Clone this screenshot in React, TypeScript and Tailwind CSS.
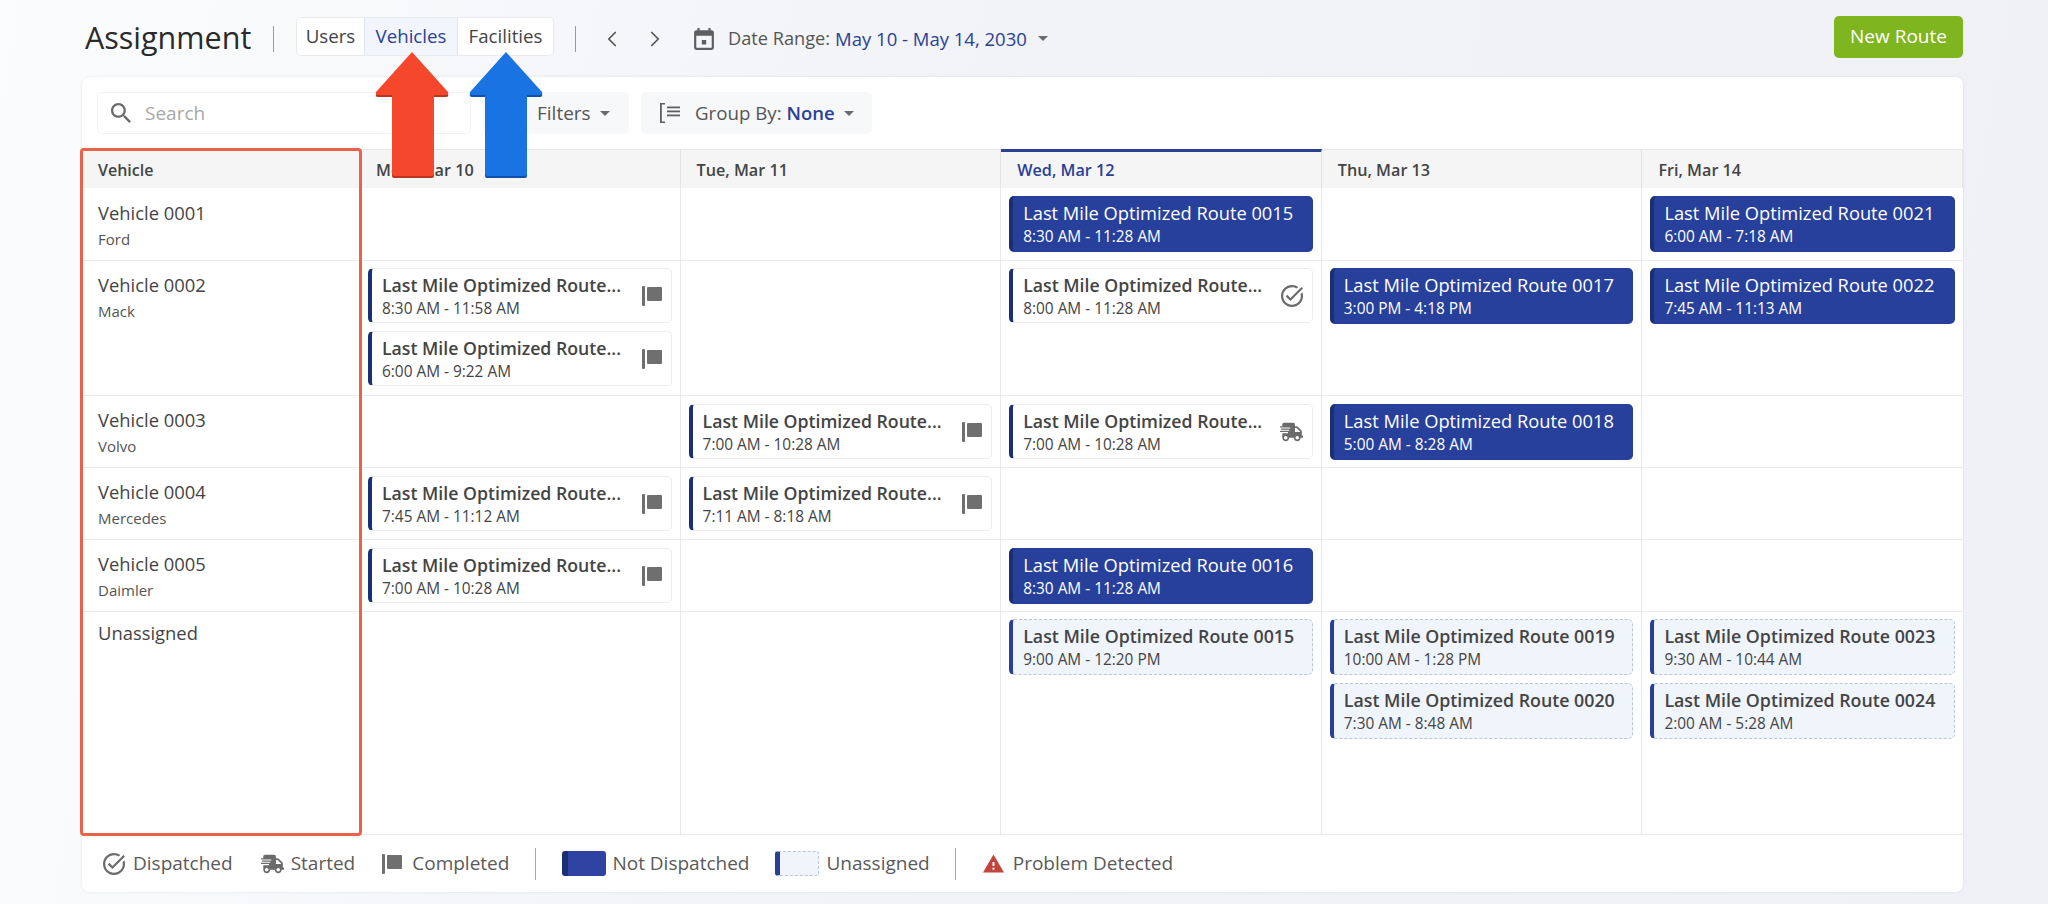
import { ChevronLeft, ChevronRight } from "lucide-react";
import { FC } from "react";
import { FaShippingFast } from "react-icons/fa";

type RouteKind = "solid" | "done" | "check" | "truck" | "open";

type Route = {
  time: string;
  num?: string;
  kind: RouteKind;
};

type Row = {
  name: string;
  make?: string;
  height: string;
  namePad: string;
  cellPad: string;
  days: Route[][];
};

const rows: Row[] = [
  {
    name: "Vehicle 0001",
    make: "Ford",
    height: "h-[73px]",
    namePad: "pt-[12px]",
    cellPad: "pt-[8px]",
    days: [
      [],
      [],
      [{ num: "0015", time: "8:30 AM - 11:28 AM", kind: "solid" }],
      [],
      [{ num: "0021", time: "6:00 AM - 7:18 AM", kind: "solid" }],
    ],
  },
  {
    name: "Vehicle 0002",
    make: "Mack",
    height: "h-[135px]",
    namePad: "pt-[11px]",
    cellPad: "pt-[7px]",
    days: [
      [
        { time: "8:30 AM - 11:58 AM", kind: "done" },
        { time: "6:00 AM - 9:22 AM", kind: "done" },
      ],
      [],
      [{ time: "8:00 AM - 11:28 AM", kind: "check" }],
      [{ num: "0017", time: "3:00 PM - 4:18 PM", kind: "solid" }],
      [{ num: "0022", time: "7:45 AM - 11:13 AM", kind: "solid" }],
    ],
  },
  {
    name: "Vehicle 0003",
    make: "Volvo",
    height: "h-[72px]",
    namePad: "pt-[11px]",
    cellPad: "pt-[8px]",
    days: [
      [],
      [{ time: "7:00 AM - 10:28 AM", kind: "done" }],
      [{ time: "7:00 AM - 10:28 AM", kind: "truck" }],
      [{ num: "0018", time: "5:00 AM - 8:28 AM", kind: "solid" }],
      [],
    ],
  },
  {
    name: "Vehicle 0004",
    make: "Mercedes",
    height: "h-[72px]",
    namePad: "pt-[11px]",
    cellPad: "pt-[8px]",
    days: [
      [{ time: "7:45 AM - 11:12 AM", kind: "done" }],
      [{ time: "7:11 AM - 8:18 AM", kind: "done" }],
      [],
      [],
      [],
    ],
  },
  {
    name: "Vehicle 0005",
    make: "Daimler",
    height: "h-[72px]",
    namePad: "pt-[11px]",
    cellPad: "pt-[8px]",
    days: [
      [{ time: "7:00 AM - 10:28 AM", kind: "done" }],
      [],
      [{ num: "0016", time: "8:30 AM - 11:28 AM", kind: "solid" }],
      [],
      [],
    ],
  },
  {
    name: "Unassigned",
    height: "h-[223px]",
    namePad: "pt-[8px]",
    cellPad: "pt-[7px]",
    days: [
      [],
      [],
      [{ num: "0015", time: "9:00 AM - 12:20 PM", kind: "open" }],
      [
        { num: "0019", time: "10:00 AM - 1:28 PM", kind: "open" },
        { num: "0020", time: "7:30 AM - 8:48 AM", kind: "open" },
      ],
      [
        { num: "0023", time: "9:30 AM - 10:44 AM", kind: "open" },
        { num: "0024", time: "2:00 AM - 5:28 AM", kind: "open" },
      ],
    ],
  },
];

const FlagIcon: FC<{ className?: string }> = ({ className }) => (
  <svg viewBox="0 0 20 20" className={className} fill="#6f6f6f">
    <rect x="0" y="0" width="3" height="20" rx="1" />
    <rect x="5" y="1" width="15" height="14" rx="1" />
  </svg>
);

const CheckIcon: FC<{ className?: string }> = ({ className }) => (
  <svg viewBox="2 2 20 20" className={className} fill="#6b6b6b">
    <path d="M22 5.18 10.59 16.6l-4.24-4.24 1.41-1.41 2.83 2.83 10-10L22 5.18zm-2.21 5.04c.13.57.21 1.17.21 1.78 0 4.42-3.58 8-8 8s-8-3.58-8-8 3.58-8 8-8c1.58 0 3.04.46 4.28 1.25l1.44-1.44C16.1 2.67 14.13 2 12 2 6.48 2 2 6.48 2 12s4.48 10 10 10 10-4.48 10-10c0-1.19-.22-2.33-.6-3.39l-1.61 1.61z" />
  </svg>
);

const Caret: FC = () => (
  <svg viewBox="0 0 10 5" className="w-[10px] h-[5px]" fill="#6b6b6b">
    <path d="M0 0h10L5 5z" />
  </svg>
);

const RouteChip: FC<{ route: Route }> = ({ route }) => {
  const label = route.num
    ? `Last Mile Optimized Route ${route.num}`
    : "Last Mile Optimized Route...";

  if (route.kind === "solid") {
    return (
      <div className="h-[56px] rounded-[5px] bg-[#27409b] border-l-[4px] border-[#1c2f73] pl-[10px] pt-[1px] flex flex-col justify-center text-white">
        <div className="text-[18.3px] leading-[24px] font-medium whitespace-nowrap">{label}</div>
        <div className="text-[15.4px] leading-[23px] whitespace-nowrap">{route.time}</div>
      </div>
    );
  }

  if (route.kind === "open") {
    return (
      <div className="h-[56px] rounded-[5px] bg-[#f0f4fb] border border-dashed border-[#b9c7df] border-l-[4px] [border-left-style:solid] border-l-[#2a4097] pl-[10px] pt-[1px] flex flex-col justify-center text-[#444444]">
        <div className="text-[17.8px] leading-[24px] font-semibold whitespace-nowrap">{label}</div>
        <div className="text-[15.4px] leading-[23px] whitespace-nowrap">{route.time}</div>
      </div>
    );
  }

  return (
    <div className="h-[55px] rounded-[5px] bg-white border border-[#ececec] border-l-[4px] border-l-[#1c2f73] pl-[10px] pr-[9px] pt-[1px] flex items-center justify-between text-[#444444]">
      <div className="flex flex-col">
        <div className="text-[17.7px] leading-[24px] font-semibold whitespace-nowrap">{label}</div>
        <div className="text-[15.4px] leading-[23px] whitespace-nowrap">{route.time}</div>
      </div>
      {route.kind === "done" && <FlagIcon className="w-[20px] h-[20px]" />}
      {route.kind === "check" && <CheckIcon className="w-[22px] h-[22px]" />}
      {route.kind === "truck" && <FaShippingFast className="w-[23px] h-[20px] text-[#6b6b6b]" />}
    </div>
  );
};

const DayHead: FC<{ label: string; today?: boolean }> = ({ label, today }) =>
  today ? (
    <div className="h-[39px] bg-[#f5f5f5] border-t-[3px] border-[#2a4097] -mt-[1px] pl-[16px] flex items-center text-[16.2px] font-semibold text-[#2a4097] border-r border-r-[#e4e4e4]">
      {label}
    </div>
  ) : (
    <div className="h-full bg-[#f5f5f5] border-r border-[#e4e4e4] pl-[16px] pt-[2px] flex items-center text-[16.2px] font-semibold text-[#444444]">
      {label}
    </div>
  );

export default function App() {
  return (
    <div className="relative w-full h-screen overflow-hidden bg-[linear-gradient(100deg,#fbfcfd_0%,#f1f3f7_45%,#eff1f6_100%)] font-['Open_Sans',sans-serif] text-[#444444] pl-[82px] pr-[85px]">
      {/* Top bar */}
      <header className="h-[77px] flex items-center">
        <h1 className="text-[30.5px] font-normal text-[#2a2a2a] w-[191px] pl-[3px] -mt-[1px] whitespace-nowrap">Assignment</h1>
        <div className="w-[1px] h-[26px] bg-[#9a9a9a]" />
        <div className="ml-[22px] h-[39px] flex items-stretch rounded-[5px] bg-white border border-[#e8eaee] text-[18.7px] font-medium -mt-[4px]">
          <div className="w-[67px] flex items-center justify-center">Users</div>
          <div className="w-[94px] flex items-center justify-center bg-[#f2f6fc] border-x border-[#e2e6ee] text-[#2a4097]">Vehicles</div>
          <div className="w-[95px] flex items-center justify-center">Facilities</div>
        </div>
        <div className="ml-[21px] w-[1px] h-[26px] bg-[#9a9a9a]" />
        <ChevronLeft className="ml-[23px] w-[26px] h-[26px] text-[#555555]" strokeWidth={1.6} />
        <ChevronRight className="ml-[17px] w-[26px] h-[26px] text-[#555555]" strokeWidth={1.6} />
        <svg viewBox="3 1 18 20" className="ml-[26px] w-[20px] h-[22px]" fill="#5f5f5f">
          <path d="M14 12h-4v4h4v-4zM16 1v2H8V1H6v2H5c-1.11 0-1.99.9-1.99 2L3 19c0 1.1.89 2 2 2h14c1.1 0 2-.9 2-2V5c0-1.1-.9-2-2-2h-1V1h-2zm3 18H5V8h14v11z" />
        </svg>
        <span className="ml-[14px] text-[18.2px] text-[#555555]">Date Range:</span>
        <span className="ml-[5px] text-[18.5px] font-medium text-[#2a4097]">May 10 - May 14, 2030</span>
        <span className="ml-[11px]"><Caret /></span>
        <button className="ml-auto w-[129px] h-[42px] -mt-[4px] rounded-[5px] bg-[#7fb51f] text-white text-[19px] font-medium">New Route</button>
      </header>

      {/* Board */}
      <main className="relative h-[815px] rounded-[7px] bg-white shadow-[0_0_3px_rgba(60,70,90,0.12)]">
        <div className="h-[72px] pl-[15px] flex items-center gap-[12px]">
          <div className="w-[374px] h-[42px] rounded-[5px] border border-[#f1f2f4] flex items-center pl-[13px] gap-[14px]">
            <svg viewBox="3 3 17.5 17.5" className="w-[20px] h-[20px]" fill="#6b6b6b">
              <path d="M15.5 14h-.79l-.28-.27C15.41 12.59 16 11.11 16 9.5 16 5.91 13.09 3 9.5 3S3 5.91 3 9.5 5.91 16 9.5 16c1.61 0 3.09-.59 4.23-1.57l.27.28v.79l5 4.99L20.49 19l-4.99-5zm-6 0C7.01 14 5 11.99 5 9.5S7.01 5 9.5 5 14 7.01 14 9.5 11.99 14 9.5 14z" />
            </svg>
            <span className="text-[19px] text-[#a8a8a8]">Search</span>
          </div>
          <div className="w-[146px] h-[42px] rounded-[5px] bg-[#f7f8fa] flex items-center pl-[54px] gap-[9px]">
            <span className="text-[19px] font-medium text-[#555555]">Filters</span>
            <Caret />
          </div>
          <div className="w-[231px] h-[42px] rounded-[5px] bg-[#f7f8fa] flex items-center pl-[19px]">
            <svg viewBox="0 0 20 20" className="w-[20px] h-[20px]" fill="#5f5f5f">
              <path d="M0 0h5v1.6H1.8v16.8H5V20H0z" />
              <rect x="7" y="3.5" width="13" height="1.8" />
              <rect x="7" y="7.5" width="13" height="1.8" />
              <rect x="7" y="11.5" width="13" height="1.8" />
            </svg>
            <span className="ml-[15px] text-[18.7px] text-[#555555]">Group By:</span>
            <span className="ml-[5px] text-[18.5px] font-semibold text-[#2a4097]">None</span>
            <span className="ml-[9px]"><Caret /></span>
          </div>
        </div>

        <div className="grid grid-cols-[278px_repeat(5,1fr)] border-t border-[#e6e6e6] h-[39px]">
          <div className="h-full bg-[#f5f5f5] pl-[16px] pt-[2px] flex items-center text-[16px] font-semibold text-[#444444]">Vehicle</div>
          <DayHead label="Mon, Mar 10" />
          <DayHead label="Tue, Mar 11" />
          <DayHead label="Wed, Mar 12" today />
          <DayHead label="Thu, Mar 13" />
          <DayHead label="Fri, Mar 14" />
        </div>

        {rows.map((row) => (
          <div key={row.name} className={`grid grid-cols-[278px_repeat(5,1fr)] border-b border-[#ebebeb] ${row.height}`}>
            <div className={`pl-[16px] border-r border-[#e9e9e9] ${row.namePad}`}>
              <div className="text-[18.4px] leading-[26px] text-[#444444]">{row.name}</div>
              {row.make && <div className="text-[15px] leading-[20px] mt-[3px] text-[#555555]">{row.make}</div>}
            </div>
            {row.days.map((day, i) => (
              <div key={i} className={`px-[8px] flex flex-col gap-[8px] border-r border-[#e9e9e9] last:border-r-0 ${row.cellPad}`}>
                {day.map((route, j) => (
                  <RouteChip key={j} route={route} />
                ))}
              </div>
            ))}
          </div>
        ))}

        {/* Legend */}
        <footer className="h-[57px] flex items-center pl-[21px] text-[19px] text-[#5a5a5a]">
          <CheckIcon className="w-[22px] h-[22px]" />
          <span className="ml-[8px]">Dispatched</span>
          <FaShippingFast className="ml-[28px] w-[23px] h-[20px] text-[#6b6b6b]" />
          <span className="ml-[7px]">Started</span>
          <FlagIcon className="ml-[27px] w-[20px] h-[20px]" />
          <span className="ml-[10px]">Completed</span>
          <div className="ml-[26px] w-[1px] h-[32px] bg-[#a8a8a8]" />
          <div className="ml-[26px] w-[44px] h-[25px] rounded-[3px] bg-[#2f43a3] border-l-[6px] border-[#1c2f73]" />
          <span className="ml-[6px]">Not Dispatched</span>
          <div className="ml-[26px] w-[44px] h-[25px] rounded-[3px] bg-[#f0f4fb] border border-dashed border-[#b9c7df] border-l-[5px] [border-left-style:solid] border-l-[#2a4097]" />
          <span className="ml-[7px]">Unassigned</span>
          <div className="ml-[25px] w-[1px] h-[32px] bg-[#a8a8a8]" />
          <svg viewBox="1 2 22 19" className="ml-[27px] w-[21px] h-[19px]" fill="#c2453d">
            <path d="M1 21h22L12 2 1 21zm12-3h-2v-2h2v2zm0-4h-2v-4h2v4z" />
          </svg>
          <span className="ml-[9px]">Problem Detected</span>
        </footer>

        {/* Highlight around the vehicle column */}
        <div className="absolute left-[-2px] top-[71px] w-[282px] h-[688px] rounded-[4px] border-[3px] border-[#e8634a] pointer-events-none" />
      </main>

      {/* Callout arrows */}
      <svg viewBox="0 0 74 126" className="absolute left-[375px] top-[52px] w-[74px] h-[126px]">
        <path d="M37 1 73 41q1 3-2 3H59v79q0 2-2 2H19q-2 0-2-2V44H3q-3 0-2-3z" fill="#b93520" transform="translate(0 1)" />
        <path d="M37 0 73 40q1 3-2 3H59v79q0 2-2 2H19q-2 0-2-2V43H3q-3 0-2-3z" fill="#f4472b" />
      </svg>
      <svg viewBox="0 0 74 126" className="absolute left-[469px] top-[52px] w-[74px] h-[126px]">
        <path d="M37 1 73 41q1 3-2 3H58v79q0 2-2 2H18q-2 0-2-2V44H3q-3 0-2-3z" fill="#124fa8" transform="translate(0 1)" />
        <path d="M37 0 73 40q1 3-2 3H58v79q0 2-2 2H18q-2 0-2-2V43H3q-3 0-2-3z" fill="#1a73e3" />
      </svg>
    </div>
  );
}
